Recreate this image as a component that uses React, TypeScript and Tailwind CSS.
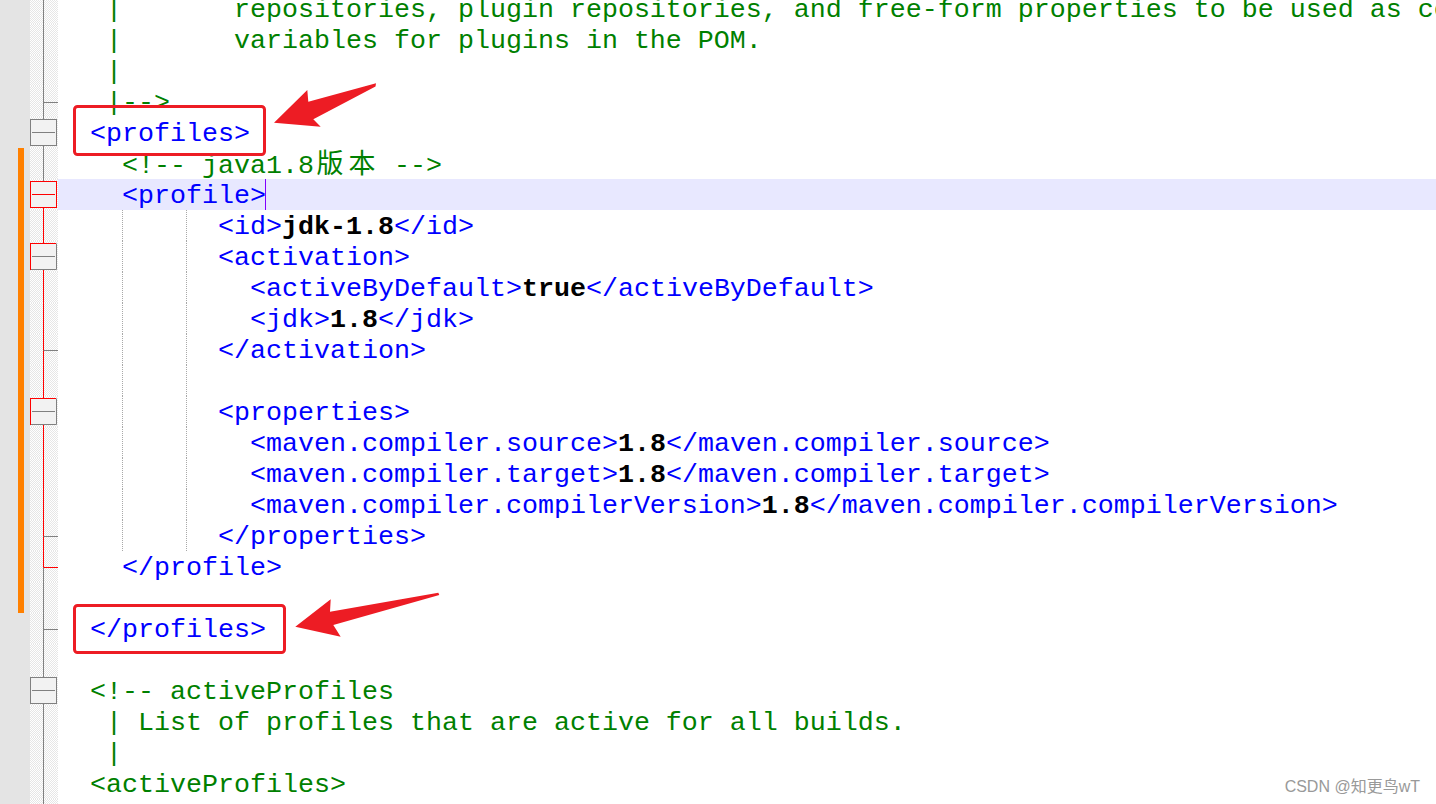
import React from 'react';

type Seg = [string, string];
type Fold = { top: string | null; bot: string | null; tick?: string; box?: 'gray' | 'red' | 'mixed' };
type Row = { segs: Seg[]; fold: Fold; orange?: boolean; hl?: boolean; caret?: boolean; guides?: boolean };

const G = '#808080';
const R = '#ff0000';

const gg: Fold = { top: G, bot: G };
const rr: Fold = { top: R, bot: R };

const rows: Row[] = [
  { segs: [['c', ' |       repositories, plugin repositories, and free-form properties to be used as configuration']], fold: gg },
  { segs: [['c', ' |       variables for plugins in the POM.']], fold: gg },
  { segs: [['c', ' |']], fold: gg },
  { segs: [['c', ' |-->']], fold: { top: G, bot: G, tick: G } },
  { segs: [['t', '<profiles>']], fold: { top: G, bot: G, box: 'gray' } },
  { segs: [['c', '  <!-- java1.8'], ['j', '版本'], ['c', ' -->']], fold: gg, orange: true },
  { segs: [['t', '  <profile>']], fold: { top: G, bot: R, box: 'red' }, orange: true, hl: true, caret: true },
  { segs: [['p', '        '], ['t', '<id>'], ['v', 'jdk-1.8'], ['t', '</id>']], fold: rr, orange: true, guides: true },
  { segs: [['t', '        <activation>']], fold: { top: R, bot: R, box: 'mixed' }, orange: true, guides: true },
  { segs: [['t', '          <activeByDefault>'], ['v', 'true'], ['t', '</activeByDefault>']], fold: rr, orange: true, guides: true },
  { segs: [['t', '          <jdk>'], ['v', '1.8'], ['t', '</jdk>']], fold: rr, orange: true, guides: true },
  { segs: [['t', '        </activation>']], fold: { top: R, bot: R, tick: G }, orange: true, guides: true },
  { segs: [], fold: rr, orange: true, guides: true },
  { segs: [['t', '        <properties>']], fold: { top: R, bot: R, box: 'mixed' }, orange: true, guides: true },
  { segs: [['t', '          <maven.compiler.source>'], ['v', '1.8'], ['t', '</maven.compiler.source>']], fold: rr, orange: true, guides: true },
  { segs: [['t', '          <maven.compiler.target>'], ['v', '1.8'], ['t', '</maven.compiler.target>']], fold: rr, orange: true, guides: true },
  { segs: [['t', '          <maven.compiler.compilerVersion>'], ['v', '1.8'], ['t', '</maven.compiler.compilerVersion>']], fold: rr, orange: true, guides: true },
  { segs: [['t', '        </properties>']], fold: { top: R, bot: R, tick: G }, orange: true, guides: true },
  { segs: [['t', '  </profile>']], fold: { top: R, bot: G, tick: R }, orange: true },
  { segs: [], fold: gg, orange: true },
  { segs: [['t', '</profiles>']], fold: { top: G, bot: G, tick: G } },
  { segs: [], fold: gg },
  { segs: [['c', '<!-- activeProfiles']], fold: { top: G, bot: G, box: 'gray' } },
  { segs: [['c', ' | List of profiles that are active for all builds.']], fold: gg },
  { segs: [['c', ' |']], fold: gg },
  { segs: [['c', '<activeProfiles>']], fold: gg },
  { segs: [], fold: gg },
];

function FoldMark({ f }: { f: Fold }) {
  const boxStroke = f.box === 'red' ? R : G;
  return (
    <svg width="28" height="31" className="block">
      {f.top && <line x1="13.5" y1="0" x2="13.5" y2={f.box ? 2 : 17} stroke={f.top} strokeWidth="1" />}
      {f.bot && <line x1="13.5" y1={f.box ? 28 : 16} x2="13.5" y2="31" stroke={f.bot} strokeWidth="1" />}
      {f.tick && <line x1="13.5" y1="16.5" x2="28" y2="16.5" stroke={f.tick} strokeWidth="1" />}
      {f.box && (
        <g>
          <rect x="0.5" y="2.5" width="26" height="26" fill="#f2f2f2" stroke={f.box === 'mixed' ? 'none' : boxStroke} strokeWidth="1" />
          {f.box === 'mixed' && (
            <g strokeWidth="1">
              <line x1="26.5" y1="2.5" x2="26.5" y2="28.5" stroke={G} />
              <line x1="0.5" y1="28.5" x2="26.5" y2="28.5" stroke={G} />
              <line x1="0.5" y1="2" x2="0.5" y2="29" stroke={R} />
              <line x1="0" y1="2.5" x2="26" y2="2.5" stroke={R} />
            </g>
          )}
          <line x1="2" y1="15.5" x2="25" y2="15.5" stroke={boxStroke} strokeWidth="1" />
        </g>
      )}
    </svg>
  );
}

function SegView({ seg }: { seg: Seg }) {
  const [k, s] = seg;
  if (k === 't') return <span className="text-[#0000ff]">{s}</span>;
  if (k === 'c') return <span className="text-[#008000]">{s}</span>;
  if (k === 'v') return <span className="font-bold text-black">{s}</span>;
  if (k === 'j')
    return (
      <>
        {s.split('').map((ch, i) => (
          <span
            key={i}
            className="inline-block w-[32px] text-center text-[#008000] text-[27px] leading-[24px] font-['Noto_Sans_CJK_SC','Noto_Sans_CJK_JP',sans-serif]"
          >
            {ch}
          </span>
        ))}
      </>
    );
  return <span>{s}</span>;
}

export default function App() {
  return (
    <div className="relative w-[1436px] h-[804px] overflow-hidden bg-white">
      <div className="-mt-[7px] flex flex-col font-['Liberation_Mono','Courier_New',monospace] text-[26.67px] leading-[31px]">
        {rows.map((r, i) => (
          <div key={i} className="flex h-[31px] shrink-0">
            <div className="w-[30px] shrink-0 bg-[#e4e4e4]">
              {r.orange && <div className="ml-[18px] w-[6px] h-full bg-[#ff8000]" />}
            </div>
            <div className="w-[28px] shrink-0 bg-[image:repeating-conic-gradient(#e6e6e6_0_25%,#ffffff_0_50%)] bg-[length:2px_2px]">
              <FoldMark f={r.fold} />
            </div>
            <div className={`relative flex-1 min-w-0 overflow-hidden whitespace-pre pl-[32px] ${r.hl ? 'bg-[#e8e8ff]' : ''}`}>
              {r.guides && (
                <>
                  <span className="absolute left-[64px] top-0 h-full border-l border-dotted border-[#a8a8a8]" />
                  <span className="absolute left-[128px] top-0 h-full border-l border-dotted border-[#a8a8a8]" />
                </>
              )}
              <span className="relative top-[2px]">
                {r.segs.map((s, j) => (
                  <SegView key={j} seg={s} />
                ))}
              </span>
              {r.caret && <span className="inline-block align-top -ml-px w-px h-[31px] bg-[#8000ff]" />}
            </div>
          </div>
        ))}
      </div>

      <svg className="absolute inset-0 pointer-events-none" width="1436" height="804">
        <rect x="74.5" y="106.5" width="190" height="48" rx="3" fill="none" stroke="#ed1c24" strokeWidth="3" />
        <rect x="74.5" y="605.5" width="210" height="47" rx="3" fill="none" stroke="#ed1c24" strokeWidth="3" />
        <polygon
          points="274,122.7 307.3,90 308.3,101.7 376,83.3 375.5,86.5 313.3,119.3 320.7,126.7"
          fill="#ed1c24"
        />
        <polygon
          points="295.3,626.7 330.7,599.3 330,611.7 438.3,592.7 439.3,595 333.3,625 340.7,636.7"
          fill="#ed1c24"
        />
      </svg>

      <div className="absolute right-[16px] bottom-[8px] text-[16px] leading-[18px] text-[#999999] font-['Liberation_Sans','Noto_Sans_CJK_SC',sans-serif] [text-shadow:0_0_2px_#ffffff]">
        CSDN @知更鸟wT
      </div>
    </div>
  );
}
